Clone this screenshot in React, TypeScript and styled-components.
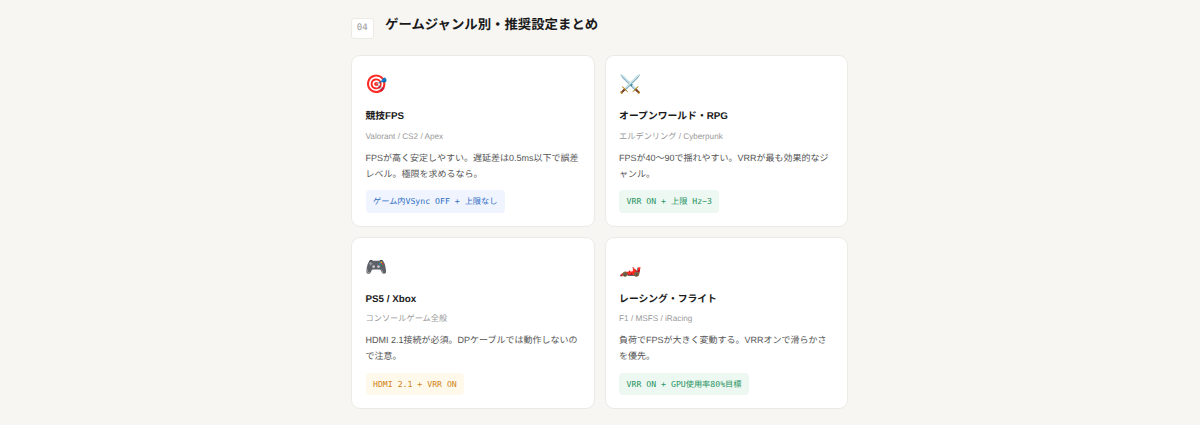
import React from "react";
import styled, { createGlobalStyle } from "styled-components";

const Global = createGlobalStyle`
  html, body { margin: 0; padding: 0; background: #f7f6f3; }
  body { font-family: "Liberation Sans", "Noto Sans CJK JP", sans-serif; color: #1a1a1a; text-rendering: geometricPrecision; }
`;
const Page = styled.div`
  width: 498px; margin: 0 auto; height: 425px; overflow: hidden;
`;
const Head = styled.div`
  display: flex; gap: 11.5px; align-items: flex-start; padding-top: 14.7px; margin-bottom: 15.6px;
`;
const Num = styled.span`
  box-sizing: border-box; margin-top: 3.8px; width: 22.5px; height: 21px; border: 1px solid #eceae5; border-radius: 3px;
  background: #fff; font: 9px/19px "DejaVu Sans Mono", "Noto Sans CJK JP", monospace; color: #999; text-align: center;
`;
const Title = styled.h2`
  margin: 0; font-size: 13.4px; line-height: 20px; font-weight: 700; color: #1a1a1a;
`;
const Grid = styled.div`
  display: grid; grid-template-columns: repeat(2, 243.8px); gap: 10px 9.8px;
`;
const Card = styled.div`
  box-sizing: border-box; height: 172.2px; background: #fff; border: 1px solid #eceae5; border-radius: 9px; padding: 15.4px 13.5px;
`;
const Emoji = styled.div`
  font: 18px/28px "Noto Color Emoji", "DejaVu Sans", sans-serif; height: 28px; margin-bottom: 9.9px;
`;
const Name = styled.div`font-size: 9.8px; line-height: 16px; font-weight: 700; color: #1a1a1a; margin-bottom: 4.4px;`;
const Sub = styled.div`font-size: 8.2px; line-height: 14px; color: #999; margin-bottom: 6.5px;`;
const Body = styled.div`font-size: 9px; line-height: 16px; color: #555; margin-bottom: 8.2px;`;
const tones = {
  blue: ["#eff4ff", "#2f6fc4"], green: ["#edf8f2", "#2a9462"], amber: ["#fff9ec", "#d0851a"],
} as const;
const Tag = styled.span<{ $tone: keyof typeof tones }>`
  display: inline-block; padding: 0 7.5px; height: 22.5px; border-radius: 4px;
  font: 8.2px/22.5px "DejaVu Sans Mono", "Noto Sans CJK JP", monospace;
  background: ${p => tones[p.$tone][0]}; color: ${p => tones[p.$tone][1]};
`;
const items = [
  { e: "🎯", n: "競技FPS", s: "Valorant / CS2 / Apex", b: "FPSが高く安定しやすい。遅延差は0.5ms以下で誤差レベル。極限を求めるなら。", t: "ゲーム内VSync OFF + 上限なし", c: "blue" },
  { e: "⚔️", n: "オープンワールド・RPG", s: "エルデンリング / Cyberpunk", b: "FPSが40〜90で揺れやすい。VRRが最も効果的なジャンル。", t: "VRR ON + 上限 Hz−3", c: "green" },
  { e: "🎮", n: "PS5 / Xbox", s: "コンソールゲーム全般", b: "HDMI 2.1接続が必須。DPケーブルでは動作しないので注意。", t: "HDMI 2.1 + VRR ON", c: "amber" },
  { e: "🏎️", n: "レーシング・フライト", s: "F1 / MSFS / iRacing", b: "負荷でFPSが大きく変動する。VRRオンで滑らかさを優先。", t: "VRR ON + GPU使用率80%目標", c: "green" },
] as const;
export default function App() {
  return (
    <Page>
      <Global />
      <Head><Num>04</Num><Title>ゲームジャンル別・推奨設定まとめ</Title></Head>
      <Grid>
        {items.map(i => (
          <Card key={i.n}>
            <Emoji>{i.e}</Emoji>
            <Name>{i.n}</Name>
            <Sub>{i.s}</Sub>
            <Body>{i.b}</Body>
            <Tag $tone={i.c}>{i.t}</Tag>
          </Card>
        ))}
      </Grid>
    </Page>
  );
}
